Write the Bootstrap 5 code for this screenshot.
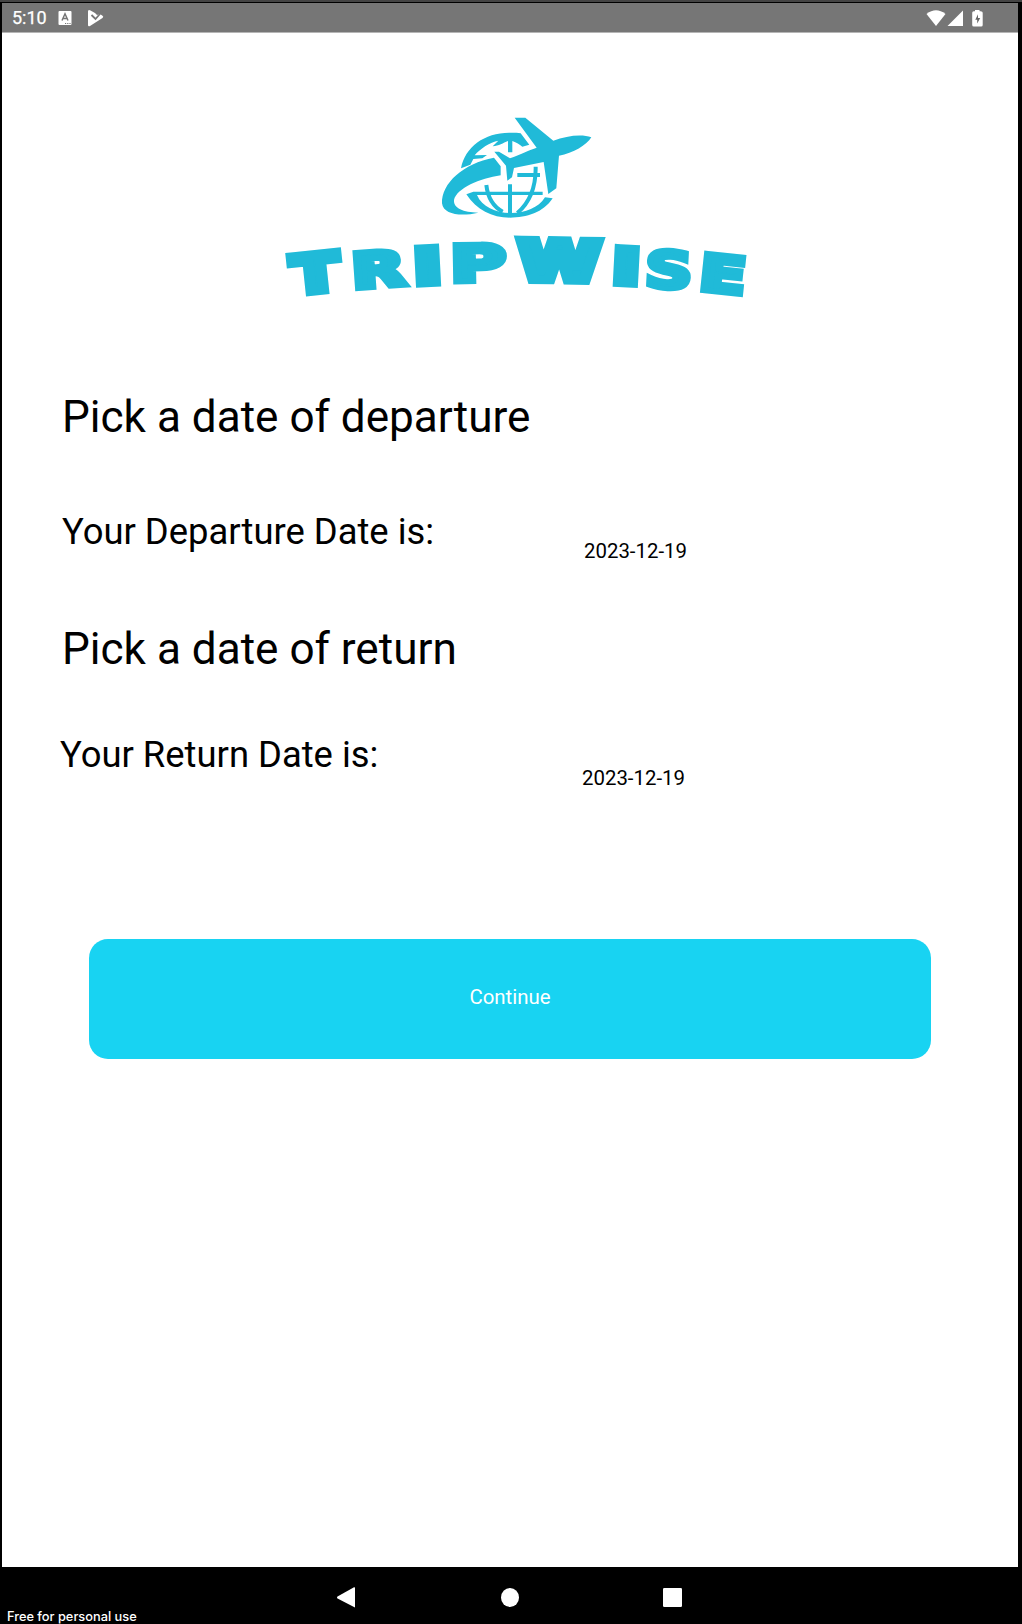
<!DOCTYPE html>
<html lang="en">
<head>
<meta charset="utf-8">
<meta name="viewport" content="width=device-width, initial-scale=1">
<title>TripWise</title>
<link href="https://cdn.jsdelivr.net/npm/bootstrap@5.3.0/dist/css/bootstrap.min.css" rel="stylesheet">
<style>
body{font-family:Roboto,"Liberation Sans",sans-serif;background:#000;color:#000}
.device{width:1022px;height:1624px;border-top:2px solid #444;padding:1px 4px 0 2px;background:#000;overflow:hidden}
.statusbar{height:30px;background:#767676;border-bottom:1px solid #b5b5b5;padding:0 35px 0 10px}
.clock{font-size:18px;line-height:29px;width:41px;-webkit-text-stroke:.25px #fff}
.app-screen{height:1534px;padding-top:77px}
.logo{width:480px;height:200px;margin-left:278px;margin-bottom:81px}
.ask{font-size:44.1px;line-height:52px;padding-left:60px;white-space:nowrap}
.ask2{margin-top:60px}
.answer{font-size:36.4px;line-height:44px}
.answer .lbl{width:522px;white-space:nowrap}
.day{font-size:20.4px;line-height:24px}
.row-dep{margin-top:67px;padding-left:60px}
.row-dep .day{margin-top:29px}
.row-ret{margin-top:58px;padding-left:58px}
.row-ret .day{margin-top:33px}
.go,.go:hover{background:#18d3f2;color:#fff}
.go{width:842px;height:120px;border-radius:19px;font-size:20.4px;margin:149px 0 0 87px;padding:0 0 4px}
.navkeys{height:57px}
.wm{font-family:Inter,"Liberation Sans",sans-serif;font-size:12.8px;font-weight:500;line-height:15px;width:335px;padding-left:5px;color:#fff}
.word{font:700 48px "DejaVu Sans",sans-serif;text-anchor:middle;fill:#20bad8;stroke:#20bad8;stroke-width:8;stroke-linejoin:miter}
.word .open{font-size:51px;stroke-width:6px}
.word .slim{font-size:52px;stroke-width:5px}
</style>
</head>
<body>
<div class="device d-flex flex-column">
  <header class="statusbar d-flex align-items-center text-white">
    <span class="clock">5:10</span>
    <svg width="76" height="28" viewBox="53 3 76 28" fill="#fff"><rect x="58.500" y="10" width="13" height="14" rx="1"/><path d="M62 19.500L65 12.800 68 19.500M63.300 17.500h3.400" fill="none" stroke="#767676" stroke-width="1.500"/><path d="M65 22.500h6" stroke="#767676" stroke-dasharray="1.200 1"/><path d="M88 10.500q0-2.200 2-1.200l5 2.700 2 2 3-1 2.500 1.800q1.500 1 0 2.200L90 25q-2 .8-2-1z"/><path d="M91.500 14l4 4 7-8" fill="none" stroke="#767676" stroke-width="1.800"/></svg>
    <svg class="ms-auto flex-shrink-0" width="58" height="28" viewBox="925 3 58 28" fill="#fff"><path d="M926.500 13Q936 5.500 945.500 13L936 25z"/><path d="M963 9.500V25H947.500z"/><path d="M975 9h4.500v1.200h1.200q2 0 2 1.500V24q0 1.500-1.500 1.500h-7.500q-1.500 0-1.500-1.500V11.700q0-1.500 1.500-1.500h1.300z"/><path d="M978 13.200l-2.700 5.500h1.900v3.800l3-5.500h-2.200z" fill="#666"/></svg>
  </header>
  <main class="app-screen bg-white">
    <svg class="logo d-block" viewBox="280 110 480 200" role="img" aria-label="TripWise">
      <g transform="translate(430 105) scale(.3333)" fill="#20bad8">
        <path d="M93 190C105 125 165 82 240 83 256 83 265 83 272 85L298 119 277 125C268 118 260 113 247 108V142L234 142V108C219 114 207 122 188 124L205 107C180 112 151 130 134 151L171 150 157 160 130 162 121 179z"/>
        <path d="M192 158L212 184V211C150 220 80 250 72 285 70 310 100 322 145 323 95 335 40 330 36 295 34 235 100 175 192 158z"/>
        <path d="M109 268L130 260H338V270H141C170 340 306 342 345 277L368 280C340 323 290 338 240 338 185 338 140 315 109 268z"/>
        <path d="M240 238V325M169 240C173 275 188 304 218 320M317 185C318 245 300 292 262 324M262 210H330" fill="none" stroke="#20bad8" stroke-width="12"/>
        <path d="M254 38H286L370 107C410 92 456 86 484 97 470 120 430 145 387 152L379 250 355 267 341 171 252 189 246 217 232 227 228 182 193 140 207 140 240 160C270 148 300 135 320 128z"/>
      </g>
      <g class="word">
        <text transform="translate(317.500 291) rotate(-6) scale(1.390 1.060)">T</text>
        <text class="open" transform="translate(379.500 286.500) rotate(-4) scale(1.370 .95)">R</text>
        <text transform="translate(428.500 283) rotate(-3) scale(1.480 1)">I</text>
        <text class="open" transform="translate(478.500 281) rotate(-1) scale(1.480 .98)">P</text>
        <text transform="translate(559 280) rotate(1) scale(1.530 1.120)">W</text>
        <text transform="translate(625.500 283.500) rotate(3) scale(1.480 1)">I</text>
        <text class="slim" transform="translate(668 288) rotate(3) scale(1.280 .98)">S</text>
        <text class="open" transform="translate(721 292) rotate(6) scale(1.330 .98)">E</text>
      </g>
    </svg>
    <div class="ask">Pick a date of departure</div>
    <div class="answer row-dep d-flex align-items-start"><span class="lbl">Your Departure Date is:</span><span class="day">2023-12-19</span></div>
    <div class="ask ask2">Pick a date of return</div>
    <div class="answer row-ret d-flex align-items-start"><span class="lbl">Your Return Date is:</span><span class="day">2023-12-19</span></div>
    <button type="button" class="btn go d-block border-0">Continue</button>
  </main>
  <footer class="navkeys d-flex align-items-end">
    <span class="wm">Free for personal use</span>
    <svg width="350" height="57" viewBox="337 1567 350 57" fill="#fff"><path d="M355 1587.500V1607.500L337.500 1598.500Q336.500 1597.500 337.500 1596.500L354 1587.300z"/><ellipse cx="510" cy="1597.500" rx="9" ry="9.500"/><rect x="663" y="1588" width="19" height="19" rx="1.300"/></svg>
  </footer>
</div>
<script src="https://cdn.jsdelivr.net/npm/bootstrap@5.3.0/dist/js/bootstrap.bundle.min.js"></script>
</body>
</html>
